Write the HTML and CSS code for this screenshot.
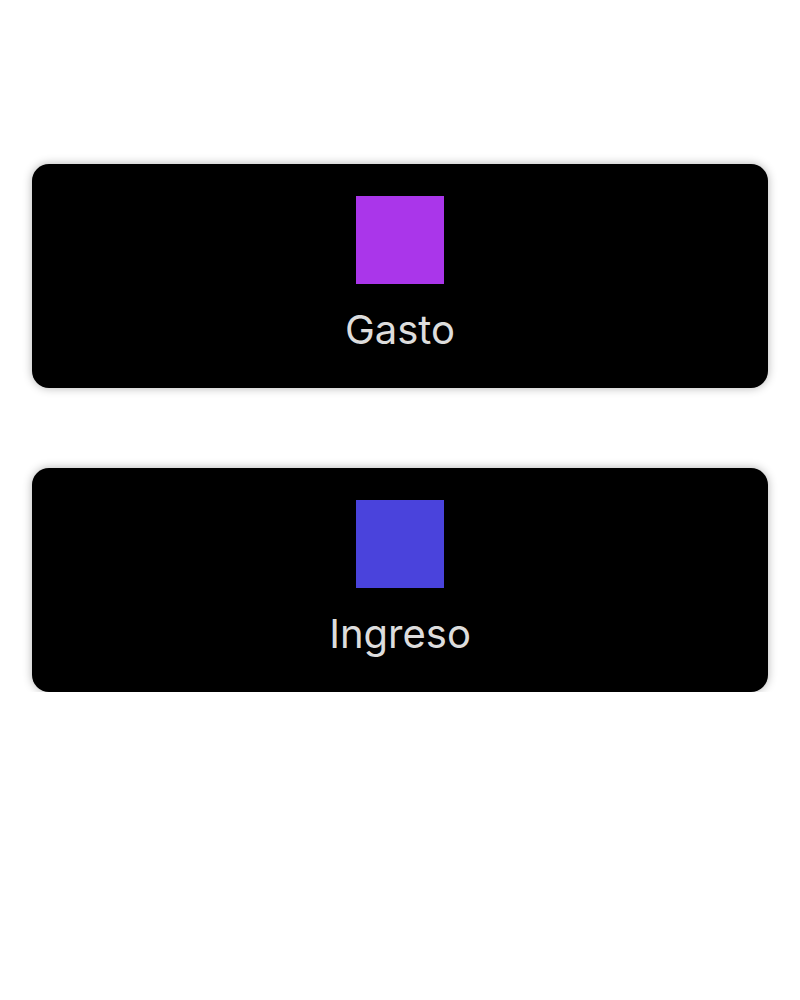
FILE: index.html
```html
<!doctype html>
<html>
	<head>
		<meta charset="utf-8" />
		<meta name="viewport" content="width=device-width, initial-scale=1" />
		<title>Tipo de movimiento</title>
		<link rel="stylesheet" href="styles.css">
	</head>
	<body>
		<div class="choices">
			<button class="choice">
				<span class="swatch gasto"></span>
				<span class="label">Gasto</span>
			</button>
			<button class="choice">
				<span class="swatch ingreso"></span>
				<span class="label">Ingreso</span>
			</button>
		</div>
	</body>
</html>
```

FILE: styles.css
```css
body {
	margin: 0;
	background-color: #fff;
	font-family: Inter, "Noto Sans", sans-serif;
}
div.choices {
	display: flex;
	flex-direction: column;
	gap: 80px;
	padding: 164px 32px 0;
}
button.choice {
	display: flex;
	flex-direction: column;
	align-items: center;
	width: 100%;
	padding: 32px 0 30px;
	border: none;
	border-radius: 17px;
	background-color: #000;
	box-shadow: 0 0 10px rgba(0, 0, 0, .3);
	font-family: inherit;
	cursor: pointer;
}
span.swatch {
	display: block;
	width: 88px;
	height: 88px;
}
span.gasto {
	background-color: #aa36ea;
}
span.ingreso {
	background-color: #4a43dc;
}
span.label {
	margin-top: 18px;
	font-size: 40px;
	line-height: 56px;
	color: #ddd;
}
```
